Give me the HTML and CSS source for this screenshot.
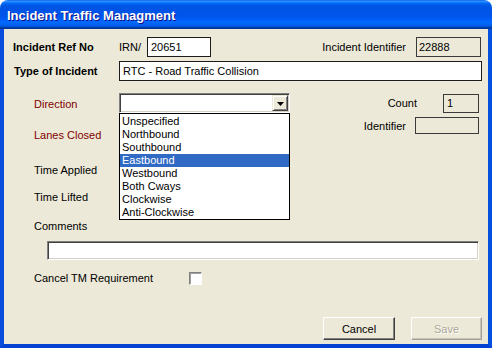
FILE: index.html
```html
<!DOCTYPE html>
<html lang="en">
<head>
    <meta charset="UTF-8">
    <meta name="viewport" content="width=device-width, initial-scale=1.0">
    <title>Incident Traffic Managment</title>
    <link rel="stylesheet" href="styles.css">
</head>
<body>
<div class="window">
    <div class="title-bar">Incident Traffic Managment</div>
    <div class="client">
        <div class="row row-ref">
            <span class="label bold">Incident Ref No</span>
            <span class="prefix">IRN/</span>
            <span class="box box-irn">20651</span>
            <span class="side-label">Incident Identifier</span>
            <span class="box readonly box-incident-id">22888</span>
        </div>
        <div class="row row-type">
            <span class="label bold type-label">Type of Incident</span>
            <span class="box box-type">RTC - Road Traffic Collision</span>
        </div>
        <div class="row row-direction">
            <span class="label indent required">Direction</span>
            <div class="combo">
                <span class="combo-btn">
                    <svg width="7" height="4" viewBox="0 0 7 4"><polygon points="0,0 7,0 3.5,4" fill="#000"/></svg>
                </span>
                <ul class="combo-list">
                    <li>Unspecified</li>
                    <li>Northbound</li>
                    <li>Southbound</li>
                    <li class="selected">Eastbound</li>
                    <li>Westbound</li>
                    <li>Both Cways</li>
                    <li>Clockwise</li>
                    <li>Anti-Clockwise</li>
                </ul>
            </div>
            <span class="side-label count-label">Count</span>
            <span class="box readonly box-count">1</span>
        </div>
        <div class="row row-lanes">
            <span class="label indent required lanes-label">Lanes Closed</span>
            <span class="side-label ident-label">Identifier</span>
            <span class="box readonly box-ident"></span>
        </div>
        <div class="label indent time-applied">Time Applied</div>
        <div class="label indent time-lifted">Time Lifted</div>
        <div class="label indent comments-label">Comments</div>
        <div class="sunken comments-box"></div>
        <div class="row row-cancel">
            <span class="label indent cancel-label">Cancel TM Requirement</span>
            <span class="checkbox"></span>
        </div>
        <div class="buttons">
            <button class="btn">Cancel</button>
            <button class="btn" disabled>Save</button>
        </div>
    </div>
</div>
</body>
</html>
```

FILE: styles.css
```css
body {margin: 0; background: #fff; font-family: "Liberation Sans", Arial, sans-serif; font-size: 11px; color: #000;}
.window {width: 492px; height: 348px;}

.title-bar {height: 29px; box-sizing: border-box; padding: 3px 0 0 7px; line-height: 26px; border-radius: 8px 8px 0 0; color: #fff; font-weight: bold; font-size: 13px; text-shadow: 1px 1px #0f1089;
    background: linear-gradient(180deg, #0058ee 0%, #3593ff 4%, #288eff 6%, #127dff 8%, #036ffc 10%, #0262ee 14%, #0057e5 20%, #0054e3 24%, #0055eb 56%, #005bf5 66%, #026afe 76%, #0062ef 86%, #0052d6 92%, #0040ab 94%, #003092 100%);}

.client {height: 319px; box-sizing: border-box; background: #ece9d8; border: 4px solid #0650e0; border-top: 0; border-left-color: #0a4ddc; border-bottom-color: #0443d2; padding: 8px 6px 0 9px; display: flex; flex-direction: column;}

.row {display: flex; align-items: center;}
.label {line-height: 13px; white-space: nowrap;}
.row > .label:first-child {width: 106px; flex: none; box-sizing: border-box;}
.bold {font-weight: bold;}
.indent {padding-left: 21px;}
.required {color: #800000;}
.side-label {margin-left: auto; line-height: 13px;}

.box {box-sizing: border-box; border: 1px solid #1c1c1c; background: #fff; line-height: 18px; padding-left: 3px; white-space: nowrap;}
.box.readonly {background: #ece9d8; border-color: #3a3a3a;}

.row-ref {height: 20px;}
.prefix {width: 28px;}
.box-irn {width: 64px; height: 20px;}
.box-incident-id {width: 65px; height: 20px; margin: 0 1px 0 10px; padding-left: 2px;}

.row-type {height: 20px; margin-top: 4px;}
.type-label {padding-left: 1px;}
.box-type {flex: 1; height: 20px; padding-left: 3px;}

.row-direction {height: 20px; margin-top: 12px;}
.row-direction > .label:first-child {padding-top: 2px;}
.combo {position: relative; width: 171px; height: 20px; box-sizing: border-box; background: #fff; display: flex; justify-content: flex-end; padding: 1px;
    border-top: 1px solid #808080; border-left: 1px solid #808080; border-right: 1px solid #fff; border-bottom: 1px solid #fff;
    box-shadow: inset 1px 1px #404040, inset -1px -1px #d4d0c8;}
.combo-btn {width: 16px; box-sizing: border-box; background: #ece9d8; display: flex; align-items: center; justify-content: center;
    border-top: 1px solid #ece9d8; border-left: 1px solid #ece9d8; border-right: 1px solid #404040; border-bottom: 1px solid #404040;
    box-shadow: inset 1px 1px #fff, inset -1px -1px #808080;}
.combo-btn svg {display: block; margin-top: 1px;}
.combo-list {position: absolute; left: -1px; top: 19px; width: 171px; box-sizing: border-box; margin: 0; padding: 1px 0 0; list-style: none; background: #fff; border: 1px solid #000; z-index: 2;}
.combo-list li {line-height: 13px; height: 13px; padding-left: 2px;}
.combo-list li.selected {background: #316ac5; color: #fff;}
.count-label {margin-right: 26px;}
.box-count {width: 36px; height: 19px; margin-right: 3px; line-height: 17px;}

.row-lanes {align-items: flex-start; margin-top: 4px;}
.lanes-label {margin-top: 12px;}
.ident-label {margin-top: 3px; margin-right: 9px;}
.box-ident {width: 64px; height: 17px; margin-right: 3px;}

.time-applied {margin-top: 22px;}
.time-lifted {margin-top: 14px;}
.comments-label {margin-top: 16px;}

.sunken {box-sizing: border-box; background: #fff; border-top: 1px solid #808080; border-left: 1px solid #808080; border-right: 1px solid #fff; border-bottom: 1px solid #fff; box-shadow: inset 1px 1px #404040, inset -1px -1px #d4d0c8;}
.comments-box {height: 19px; margin: 8px 3px 0 34px;}

.row-cancel {height: 13px; margin-top: 12px;}
.row > .label.cancel-label {width: 176px;}
.checkbox {width: 13px; height: 13px; box-sizing: border-box; background: #fff; border-top: 1px solid #808080; border-left: 1px solid #808080; border-right: 1px solid #fff; border-bottom: 1px solid #fff; box-shadow: inset 1px 1px #a0a0a0;}

.buttons {display: flex; justify-content: flex-end; gap: 16px; margin-top: 32px;}
.btn {width: 72px; height: 23px; box-sizing: border-box; padding: 0; font-family: "Liberation Sans", Arial, sans-serif; font-size: 11px; font-weight: normal; color: #000; background: #ece9d8;
    border-top: 1px solid #fff; border-left: 1px solid #fff; border-right: 1px solid #404040; border-bottom: 1px solid #404040; box-shadow: inset -1px -1px #808080;}
.btn:disabled {width: 71px; color: #aca899; text-shadow: 1px 1px #fff; border-right-color: #a0a0a0; border-bottom-color: #a0a0a0; box-shadow: inset -1px -1px #c8c4b4;}
```
